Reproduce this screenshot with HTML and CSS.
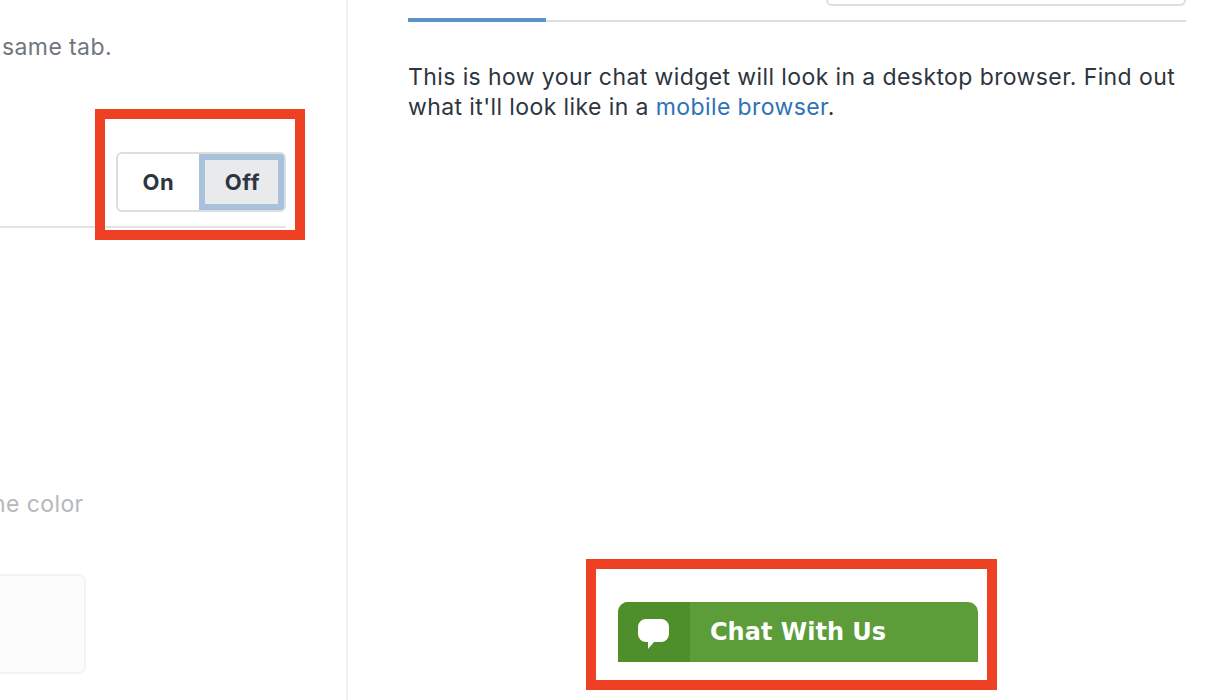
FILE: index.html
```html
<!DOCTYPE html>
<html lang="en">
<head>
    <meta charset="UTF-8">
    <meta name="viewport" content="width=device-width, initial-scale=1.0">
    <title>Chat Widget Settings</title>
    <link rel="stylesheet" href="styles.css">
</head>

<body>
    <div class="page">
        <!-- Settings column, scrolled off to the left -->
        <section class="settings">
            <p class="hint hint-tab">same tab.</p>
            <div class="setting-row">
                <div class="toggle">
                    <span class="toggle-option">On</span>
                    <span class="toggle-option toggle-active">Off</span>
                </div>
            </div>
            <p class="hint hint-color">he color</p>
            <div class="color-box"></div>
        </section>

        <!-- Preview column -->
        <section class="preview">
            <div class="preview-top">
                <div class="search-box"></div>
            </div>
            <div class="tabs">
                <div class="tab-active"></div>
            </div>
            <p class="preview-text">This is how your chat widget will look in a desktop browser. Find out what it'll look like in a <a href="#mobile">mobile browser</a>.</p>
            <div class="chat-widget">
                <div class="chat-icon">
                    <svg width="32" height="36" viewBox="0 0 32 36">
                        <path d="M8 5h15a8 8 0 0 1 8 8v7a8 8 0 0 1-8 8h-7l-6 7v-7h-2a8 8 0 0 1-8-8v-7a8 8 0 0 1 8-8z" fill="#fff"/>
                    </svg>
                </div>
                <div class="chat-label">Chat With Us</div>
            </div>
        </section>

        <!-- Annotation frames -->
        <div class="frame frame-toggle"></div>
        <div class="frame frame-chat"></div>
    </div>
</body>
</html>
```

FILE: styles.css
```css
/* General Styles */
html, body {
    margin: 0;
    padding: 0;
    background-color: #fff;
}

.page {
    position: relative;
    display: flex;
    width: 1214px;
    height: 700px;
    overflow: hidden;
    font-family: Inter, "Liberation Sans", sans-serif;
    color: #2d3540;
}

/* Settings column */
.settings {
    flex: none;
    box-sizing: border-box;
    width: 348px;
    height: 700px;
    border-right: 2px solid #eff0f1;
    overflow: hidden;
}

.hint {
    margin: 0;
    font-size: 23px;
    line-height: 30px;
    letter-spacing: 0.4px;
    white-space: nowrap;
}

.hint-tab {
    margin-top: 32px;
    margin-left: 2px;
    color: #6f767e;
}

.hint-color {
    margin-top: 261px;
    margin-left: -8px;
    color: #b5b8bc;
}

.setting-row {
    display: flex;
    justify-content: flex-end;
    width: 286px;
    margin-top: 90px;
    padding-bottom: 14px;
    border-bottom: 2px solid #e2e3e5;
}

.toggle {
    display: flex;
    box-sizing: border-box;
    width: 170px;
    height: 60px;
    border: 2px solid #dcdee0;
    border-radius: 6px;
}

.toggle-option {
    flex: 1;
    display: flex;
    align-items: center;
    justify-content: center;
    font-size: 22px;
    font-weight: 700;
    letter-spacing: 0.6px;
}

.toggle-active {
    flex: none;
    box-sizing: border-box;
    width: 85px;
    padding-left: 2px;
    border: 6px solid #a9c1da;
    border-radius: 0 3px 3px 0;
    background-color: #e9eaec;
}

.color-box {
    box-sizing: border-box;
    width: 86px;
    height: 100px;
    margin-top: 55px;
    border: 2px solid #f3f3f4;
    border-left: none;
    border-radius: 0 8px 8px 0;
    background-color: #fcfcfc;
}

/* Preview column */
.preview {
    display: flex;
    flex-direction: column;
    box-sizing: border-box;
    width: 778px;
    height: 700px;
    margin-left: 60px;
    padding-bottom: 38px;
}

.preview-top {
    display: flex;
    justify-content: flex-end;
    height: 20px;
}

.search-box {
    box-sizing: border-box;
    width: 360px;
    height: 6px;
    border: 2px solid #dcdee0;
    border-top: none;
    border-radius: 0 0 8px 8px;
}

.tabs {
    height: 2px;
    background-color: #dcdee0;
}

.tab-active {
    position: relative;
    top: -2px;
    width: 138px;
    height: 4px;
    background-color: #5e94c5;
}

.preview-text {
    margin: 40px 0 0;
    font-size: 23px;
    line-height: 30px;
    letter-spacing: 0.4px;
}

.preview-text a {
    color: #2f72b5;
    text-decoration: none;
}

/* Chat widget */
.chat-widget {
    display: flex;
    width: 360px;
    height: 60px;
    margin-top: auto;
    margin-left: 210px;
    border-radius: 10px 10px 0 0;
    overflow: hidden;
    background-color: #5c9c39;
}

.chat-icon {
    display: flex;
    align-items: center;
    justify-content: center;
    width: 72px;
    background-color: #4e8f2c;
}

.chat-label {
    padding-left: 20px;
    font-family: "DejaVu Sans", sans-serif;
    font-size: 24px;
    font-weight: 700;
    line-height: 60px;
    color: #fff;
}

/* Annotation frames */
.frame {
    position: absolute;
    box-sizing: border-box;
    border: 10px solid #ee4023;
}

.frame-toggle {
    left: 95px;
    top: 109px;
    width: 210px;
    height: 131px;
}

.frame-chat {
    left: 586px;
    top: 559px;
    width: 411px;
    height: 131px;
}
```
